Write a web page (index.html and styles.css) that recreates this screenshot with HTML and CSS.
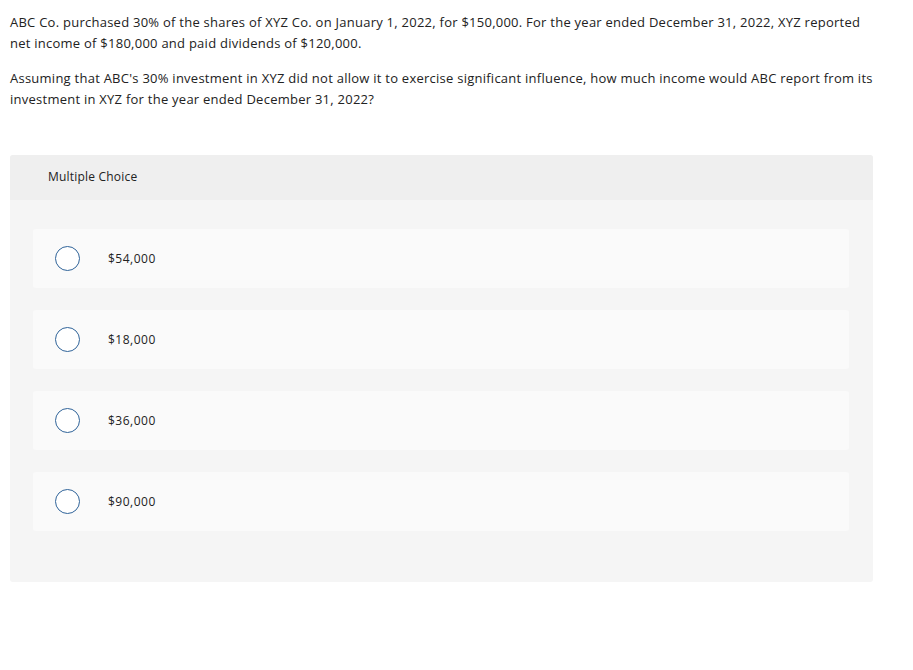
FILE: index.html
```html
<!DOCTYPE html>
<html>
<head>
<meta charset="utf-8">
<link rel="stylesheet" href="styles.css">
</head>
<body>
<div class="question">
  <p>ABC Co. purchased 30% of the shares of XYZ Co. on January 1, 2022, for $150,000. For the year ended December 31, 2022, XYZ reported net income of $180,000 and paid dividends of $120,000.</p>
  <p>Assuming that ABC's 30% investment in XYZ did not allow it to exercise significant influence, how much income would ABC report from its investment in XYZ for the year ended December 31, 2022?</p>
</div>
<div class="panel">
  <div class="panel-head">Multiple Choice</div>
  <div class="options">
    <div class="option"><span class="radio"></span><span class="label">$54,000</span></div>
    <div class="option"><span class="radio"></span><span class="label">$18,000</span></div>
    <div class="option"><span class="radio"></span><span class="label">$36,000</span></div>
    <div class="option"><span class="radio"></span><span class="label">$90,000</span></div>
  </div>
</div>
</body>
</html>
```
FILE: styles.css
```css
html, body { margin: 0; padding: 0; background: #fff; }
body {
  font-family: "Open Sans", "Lato", sans-serif;
  color: #222;
  padding: 12px 40px 0 10px;
  width: 863px;
}
.question p {
  margin: 0 0 14px 0;
  font-size: 13px;
  letter-spacing: 0.25px;
  line-height: 21px;
}
.question { margin-bottom: 45px; }
.panel {
  background: #f5f5f5;
  border-radius: 3px;
  padding-bottom: 51px;
}
.panel-head {
  background: #efefef;
  border-radius: 3px 3px 0 0;
  height: 45px;
  box-sizing: border-box;
  padding-bottom: 2px;
  display: flex;
  align-items: center;
  padding-left: 38px;
  font-size: 12px;
  letter-spacing: 0.2px;
  color: #222;
}
.options {
  display: flex;
  flex-direction: column;
  gap: 22px;
  padding: 29px 24px 0 23px;
}
.option {
  background: #fafafa;
  border-radius: 3px;
  height: 59px;
  display: flex;
  align-items: center;
  padding-left: 22px;
}
.radio {
  width: 23px;
  height: 23px;
  border: 1.5px solid #2f6399;
  border-radius: 50%;
  background: #fff;
  box-sizing: content-box;
  flex: none;
}
.label {
  margin-left: 28px;
  font-size: 12px;
  letter-spacing: 0.5px;
}
```
